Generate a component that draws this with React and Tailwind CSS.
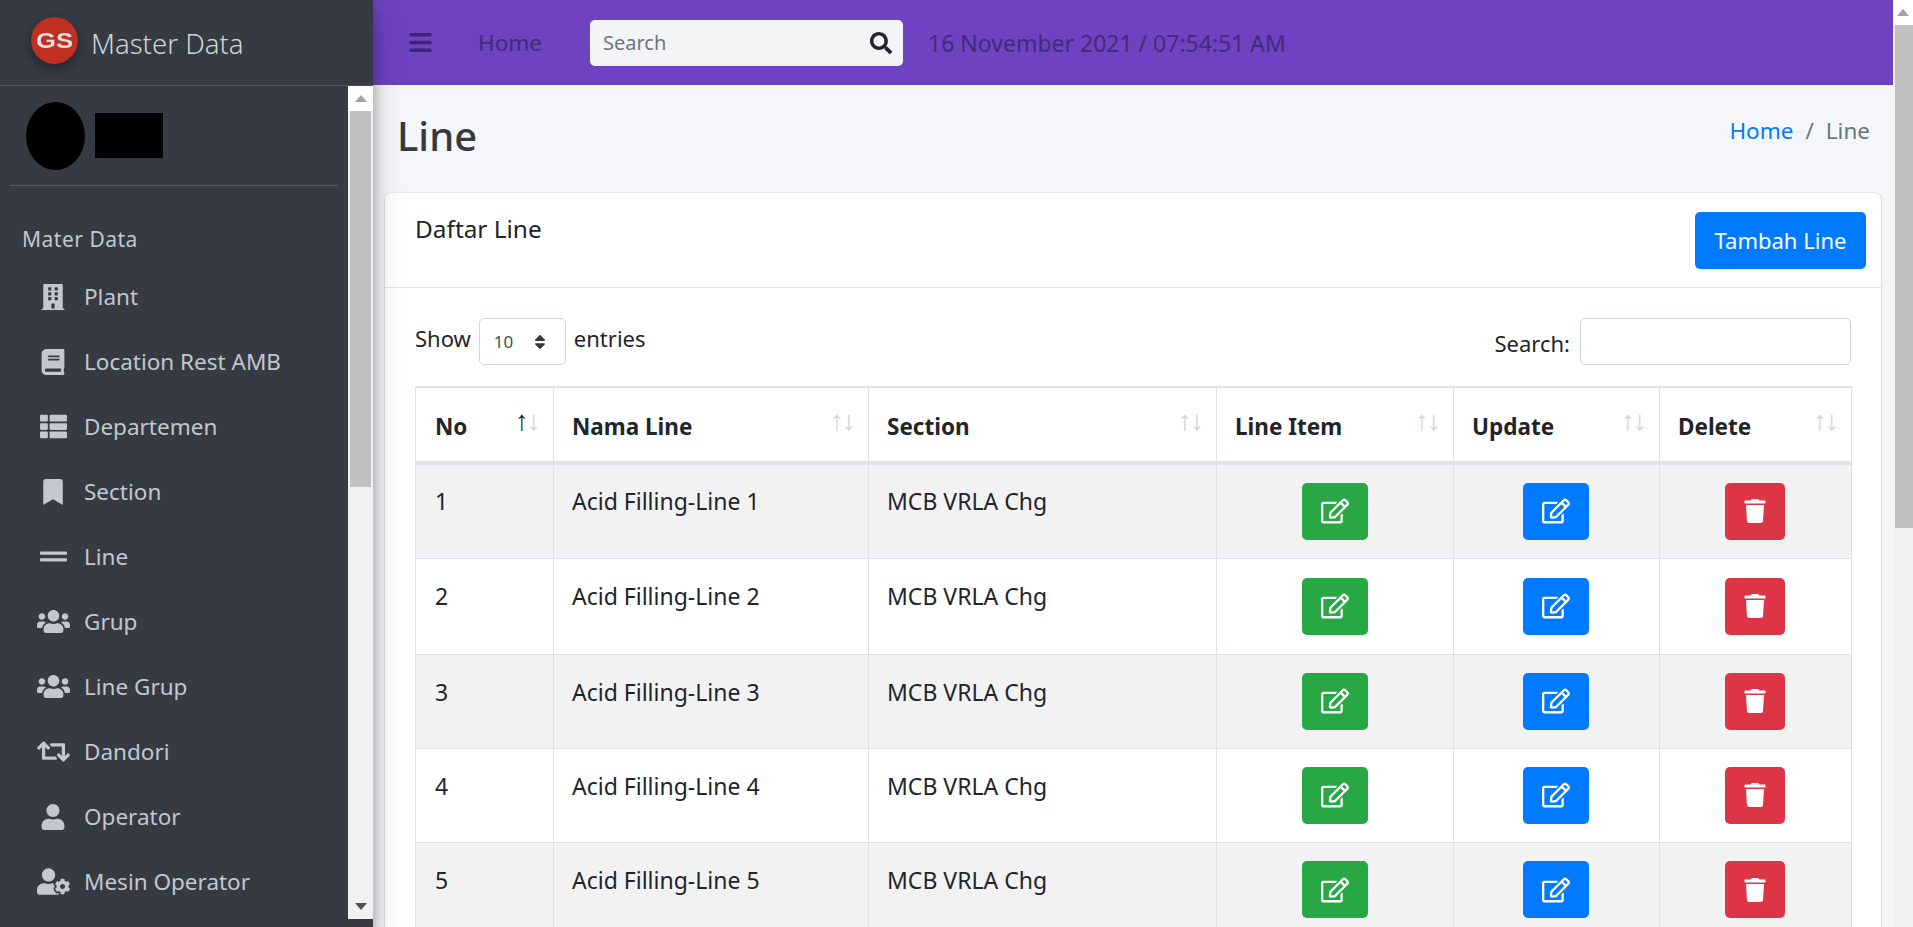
import React from "react";
import { FaBuilding, FaBook, FaThList, FaBookmark, FaGripLines, FaUsers, FaRetweet, FaUser, FaUserCog, FaBars, FaSearch, FaRegEdit, FaTrash, FaSort } from "react-icons/fa";

const nav = [
  ["Plant", FaBuilding, "text-[26px]"],
  ["Location Rest AMB", FaBook, "text-[26px]"],
  ["Departemen", FaThList, "text-[27px]"],
  ["Section", FaBookmark, "text-[26px]"],
  ["Line", FaGripLines, "text-[27px]"],
  ["Grup", FaUsers, "text-[33px]"],
  ["Line Grup", FaUsers, "text-[33px]"],
  ["Dandori", FaRetweet, "text-[33px]"],
  ["Operator", FaUser, "text-[26px]"],
  ["Mesin Operator", FaUserCog, "text-[33px]"],
];

const columns = [
  ["No", "w-[138px] pl-[19px]"],
  ["Nama Line", "w-[315px] pl-[18px]"],
  ["Section", "w-[348px] pl-[18px]"],
  ["Line Item", "w-[237px] pl-[18px]"],
  ["Update", "w-[206px] pl-[18px]"],
  ["Delete", "w-[192px] pl-[18px]"],
];

const rows = [
  { n: 1, row: "h-[95px] bg-[#f2f2f2]", pad: "pt-[21px]" },
  { n: 2, row: "h-[96px] bg-white", pad: "pt-[22px]" },
  { n: 3, row: "h-[94px] bg-[#f2f2f2]", pad: "pt-[22px]" },
  { n: 4, row: "h-[94px] bg-white", pad: "pt-[22px]" },
  { n: 5, row: "h-[95px] bg-[#f2f2f2]", pad: "pt-[22px]" },
];

function ScrollArrow({ down, color }) {
  return (
    <div className="h-[25px] flex items-center justify-center shrink-0">
      <svg width="12" height="7" viewBox="0 0 12 7" fill={color}>
        <path d={down ? "M0 0h12L6 7z" : "M0 7h12L6 0z"} />
      </svg>
    </div>
  );
}

function SortArrows({ active }) {
  return (
    <span className="absolute right-[14px] top-[16px] text-[28px] leading-[30px] tracking-[-2px] font-normal">
      <span className={active ? "text-[#212529]" : "text-[#d0d2d5]"}>↑</span>
      <span className="text-[#d0d2d5]">↓</span>
    </span>
  );
}

function ActionButton({ className, children }) {
  return (
    <button className={`${className} h-[57px] rounded-[5px] text-white inline-flex items-center justify-center`}>
      {children}
    </button>
  );
}

export default function App() {
  return (
    <div className="flex h-[927px] w-[1913px] overflow-hidden bg-[#f4f6f9] text-[22.5px] text-[#212529] font-['Noto_Sans',sans-serif]">
      <aside className="relative z-10 w-[373px] h-full shrink-0 bg-[#353a43] flex flex-col shadow-[0_14px_28px_rgba(0,0,0,0.25),0_10px_10px_rgba(0,0,0,0.22)]">
        <div className="h-[86px] shrink-0 border-b border-[#4b545c] flex items-center pl-[31px] pb-[4px]">
          <svg width="47" height="47" viewBox="0 0 47 47" className="shrink-0 drop-shadow-[0_4px_5px_rgba(0,0,0,0.4)]">
            <circle cx="23.5" cy="23.5" r="23.5" fill="#bf3022" />
            <text x="23.5" y="31" textAnchor="middle" fill="#e3dfdc" fontSize="22" fontWeight="800" textLength="37" lengthAdjust="spacingAndGlyphs" fontFamily="Liberation Sans, sans-serif">GS</text>
          </svg>
          <span className="ml-[13px] mt-[7px] text-[27.5px] font-light text-[#d0d3d8] leading-none">Master Data</span>
        </div>
        <div className="flex h-[833px] shrink-0">
          <div className="w-[348px] shrink-0 overflow-hidden">
            <div className="mx-[10px] h-[100px] border-b border-[#4f5962] flex items-center gap-[10px] pl-[16px] pb-[0px]">
              <div className="w-[59px] h-[68px] rounded-[50%] bg-black" />
              <div className="w-[68px] h-[45px] bg-black" />
            </div>
            <div className="pl-[22px] mt-[39px] h-[28px] text-[21px] tracking-[0.5px] leading-[28px] text-[#c2c7d0]">Mater Data</div>
            <nav className="mt-[11px]">
              {nav.map(([label, Icon, size]) => (
                <div key={label} className="h-[65px] flex items-center pl-[33px] text-[#c2c7d0]">
                  <span className={`w-[40px] flex justify-center shrink-0 ${size}`}><Icon /></span>
                  <span className="ml-[11px] leading-[30px]">{label}</span>
                </div>
              ))}
            </nav>
          </div>
          <div className="w-[25px] h-full bg-[#f1f1f1] flex flex-col">
            <div className="bg-white"><ScrollArrow color="#a3a3a3" /></div>
            <div className="mx-[2px] h-[376px] bg-[#c1c1c1]" />
            <div className="flex-1" />
            <ScrollArrow down color="#505050" />
          </div>
        </div>
      </aside>

      <main className="w-[1520px] shrink-0 h-full overflow-hidden">
        <header className="h-[85px] bg-[#6f42c1] flex items-center pl-[35px] text-[#45297a]">
          <FaBars className="text-[25px] text-[#3e2571]" />
          <span className="ml-[45px] w-[63px] leading-[30px] mt-[1px]">Home</span>
          <div className="ml-[49px] w-[313px] h-[46px] bg-[#f2f4f6] rounded-[5px] flex items-center justify-between pl-[13px] pr-[11px]">
            <span className="text-[#6c757d] text-[20px]">Search</span>
            <FaSearch className="text-[22px] text-[#212529]" />
          </div>
          <span className="ml-[25px] leading-[30px] text-[23px] mt-[1px]">16 November 2021 / 07:54:51 AM</span>
        </header>

        <div className="h-[108px] flex items-start justify-between pl-[24px] pr-[23px] pt-[27px]">
          <h1 className="text-[40px] leading-[48px] font-medium text-[#343a40]">Line</h1>
          <div className="flex items-center leading-[30px] mt-[4px]">
            <span className="text-[#007bff]">Home</span>
            <span className="text-[#6c757d] px-[12px]">/</span>
            <span className="text-[#6c757d]">Line</span>
          </div>
        </div>

        <section className="mx-[12px] bg-white rounded-t-[6px] shadow-[0_0_1px_rgba(0,0,0,0.25),0_1px_3px_rgba(0,0,0,0.2)]">
          <div className="h-[95px] border-b border-[#dfe1e4] flex items-start justify-between pl-[30px] pr-[15px]">
            <span className="mt-[21px] text-[24.4px] leading-[30px]">Daftar Line</span>
            <button className="mt-[19px] w-[171px] h-[57px] rounded-[5px] bg-[#007bff] text-white text-[22px]">Tambah Line</button>
          </div>
          <div className="px-[30px] pt-[30px]">
            <div className="flex justify-between h-[68px] text-[22px]">
              <div className="flex items-start gap-[8px]">
                <span className="leading-[30px] mt-[5px]">Show</span>
                <div className="w-[87px] h-[47px] border border-[#ced4da] rounded-[5px] flex items-center justify-between pl-[14px] pr-[16px] text-[17px] text-[#495057]">
                  <span>10</span>
                  <FaSort className="text-[18px] text-[#343a40]" />
                </div>
                <span className="leading-[30px] mt-[5px]">entries</span>
              </div>
              <div className="flex items-start gap-[10px]">
                <span className="leading-[30px] mt-[10px]">Search:</span>
                <div className="w-[271px] h-[47px] border border-[#ced4da] rounded-[5px]" />
              </div>
            </div>
            <table className="table-fixed border-collapse w-[1436px] border-t-2 border-[#dee2e6]">
              <thead>
                <tr className="h-[76px]">
                  {columns.map(([label, width], i) => (
                    <th key={label} className={`${width} relative border border-[#dee2e6] border-b-[4px] pt-[5px] text-left font-bold leading-[30px]`}>
                      {label}
                      <SortArrows active={i === 0} />
                    </th>
                  ))}
                </tr>
              </thead>
              <tbody className="text-[23px]">
                {rows.map(({ n, row, pad }) => (
                  <tr key={n} className={row}>
                    <td className={`border border-[#dee2e6] pl-[19px] align-top ${pad} leading-[30px]`}>{n}</td>
                    <td className={`border border-[#dee2e6] pl-[18px] align-top ${pad} leading-[30px]`}>Acid Filling-Line {n}</td>
                    <td className={`border border-[#dee2e6] pl-[18px] align-top ${pad} leading-[30px]`}>MCB VRLA Chg</td>
                    <td className="border border-[#dee2e6] text-center">
                      <ActionButton className="bg-[#28a745] w-[66px]"><FaRegEdit className="text-[28px]" /></ActionButton>
                    </td>
                    <td className="border border-[#dee2e6] text-center">
                      <ActionButton className="bg-[#007bff] w-[66px] mr-[2px]"><FaRegEdit className="text-[28px]" /></ActionButton>
                    </td>
                    <td className="border border-[#dee2e6] text-center">
                      <ActionButton className="bg-[#dc3545] w-[60px] mr-[1px]"><FaTrash className="text-[24px]" /></ActionButton>
                    </td>
                  </tr>
                ))}
              </tbody>
            </table>
          </div>
        </section>
      </main>

      <div className="w-[20px] h-full shrink-0 bg-[#f1f1f1] flex flex-col">
        <div className="bg-white h-[25px] flex items-center justify-center">
          <svg width="12" height="7" viewBox="0 0 12 7" fill="#a3a3a3"><path d="M0 7h12L6 0z" /></svg>
        </div>
        <div className="ml-[2px] h-[503px] bg-[#c1c1c1]" />
      </div>
    </div>
  );
}
